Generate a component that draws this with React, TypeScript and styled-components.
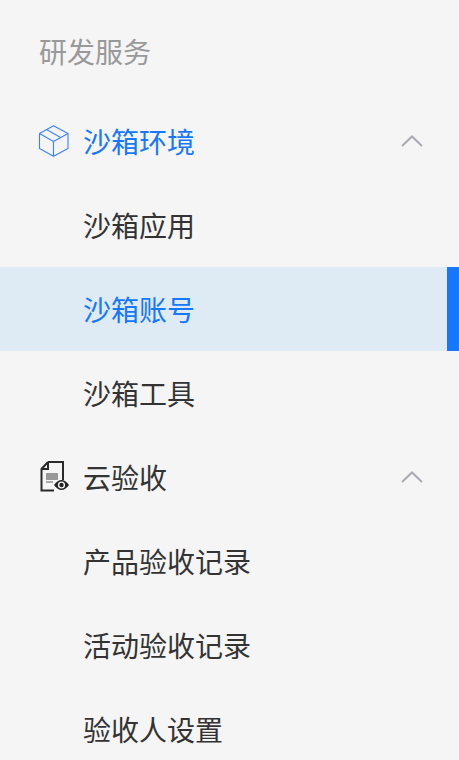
import styled, { createGlobalStyle } from "styled-components";

const GlobalStyle = createGlobalStyle`
  html, body {
    margin: 0;
    padding: 0;
    background: #f5f5f5;
    overflow: hidden;
  }
`;

const Sidebar = styled.div`
  width: 459px;
  height: 760px;
  overflow: hidden;
  background: #f5f5f5;
  font-family: "Liberation Sans", "Noto Sans CJK SC", sans-serif;
  font-size: 28px;
`;

const GroupTitle = styled.div`
  height: 99px;
  padding: 9px 0 0 39px;
  display: flex;
  align-items: center;
  color: #999;
  box-sizing: border-box;
  line-height: 40px;
`;

const Row = styled.div<{ $active?: boolean; $open?: boolean }>`
  height: 84px;
  display: flex;
  align-items: center;
  box-sizing: border-box;
  padding-left: 83px;
  color: ${(p) => (p.$active || p.$open ? "#1677ff" : "#333")};
  background: ${(p) => (p.$active ? "#deebf5" : "transparent")};
  border-right: ${(p) => (p.$active ? "12px solid #1677ff" : "none")};
`;

const ParentRow = styled(Row)`
  padding-left: 38px;
  padding-right: 36px;
`;

const IconSlot = styled.span`
  width: 45px;
  height: 32px;
  display: flex;
  align-items: center;
  flex: none;
`;

const Label = styled.span`
  flex: 1;
`;

const ChevronSvg = styled.svg`
  margin-bottom: 1px;
`;

const BoxIcon = () => (
  <svg width="32" height="32" viewBox="0 0 32 32" fill="none" stroke="#3a80ff" strokeWidth="1.1" strokeLinejoin="round">
    <path d="M15.5 0.8 L30 8.5 V23.5 L15.5 31.2 L1.5 23.5 V8.5 Z" />
    <path d="M1.5 8.5 L15.5 16.5 L30 8.5" />
    <path d="M15.5 16.5 V31.2" />
    <path d="M8.5 4.5 L22.5 12.5" />
  </svg>
);

const DocEyeIcon = () => (
  <svg width="32" height="32" viewBox="0 0 32 32" fill="none">
    <path d="M10 1 H25 V19 M10 1 L3.5 8 V29.5 H16 M10 1 V8 H3.5" stroke="#2a2a2a" strokeWidth="2" />
    <rect x="8" y="12" width="12" height="7" fill="#999" />
    <rect x="8" y="20" width="7" height="2" fill="#aaa" />
    <path d="M16 24 Q23.5 14 31 24 Q23.5 34 16 24 Z" fill="#222" />
    <circle cx="23.5" cy="24" r="3.6" fill="#f5f5f5" />
    <circle cx="23.5" cy="24" r="2.2" fill="#222" />
  </svg>
);

const Chevron = () => (
  <ChevronSvg width="22" height="12" viewBox="0 0 22 12" fill="none" stroke="#aaaab4" strokeWidth="2">
    <path d="M1 11 L11 1.5 L21 11" />
  </ChevronSvg>
);

export default function App() {
  return (
    <>
      <GlobalStyle />
      <Sidebar>
        <GroupTitle>研发服务</GroupTitle>
        <ParentRow $open>
          <IconSlot>
            <BoxIcon />
          </IconSlot>
          <Label>沙箱环境</Label>
          <Chevron />
        </ParentRow>
        <Row>沙箱应用</Row>
        <Row $active>沙箱账号</Row>
        <Row>沙箱工具</Row>
        <ParentRow>
          <IconSlot>
            <DocEyeIcon />
          </IconSlot>
          <Label>云验收</Label>
          <Chevron />
        </ParentRow>
        <Row>产品验收记录</Row>
        <Row>活动验收记录</Row>
        <Row>验收人设置</Row>
      </Sidebar>
    </>
  );
}
